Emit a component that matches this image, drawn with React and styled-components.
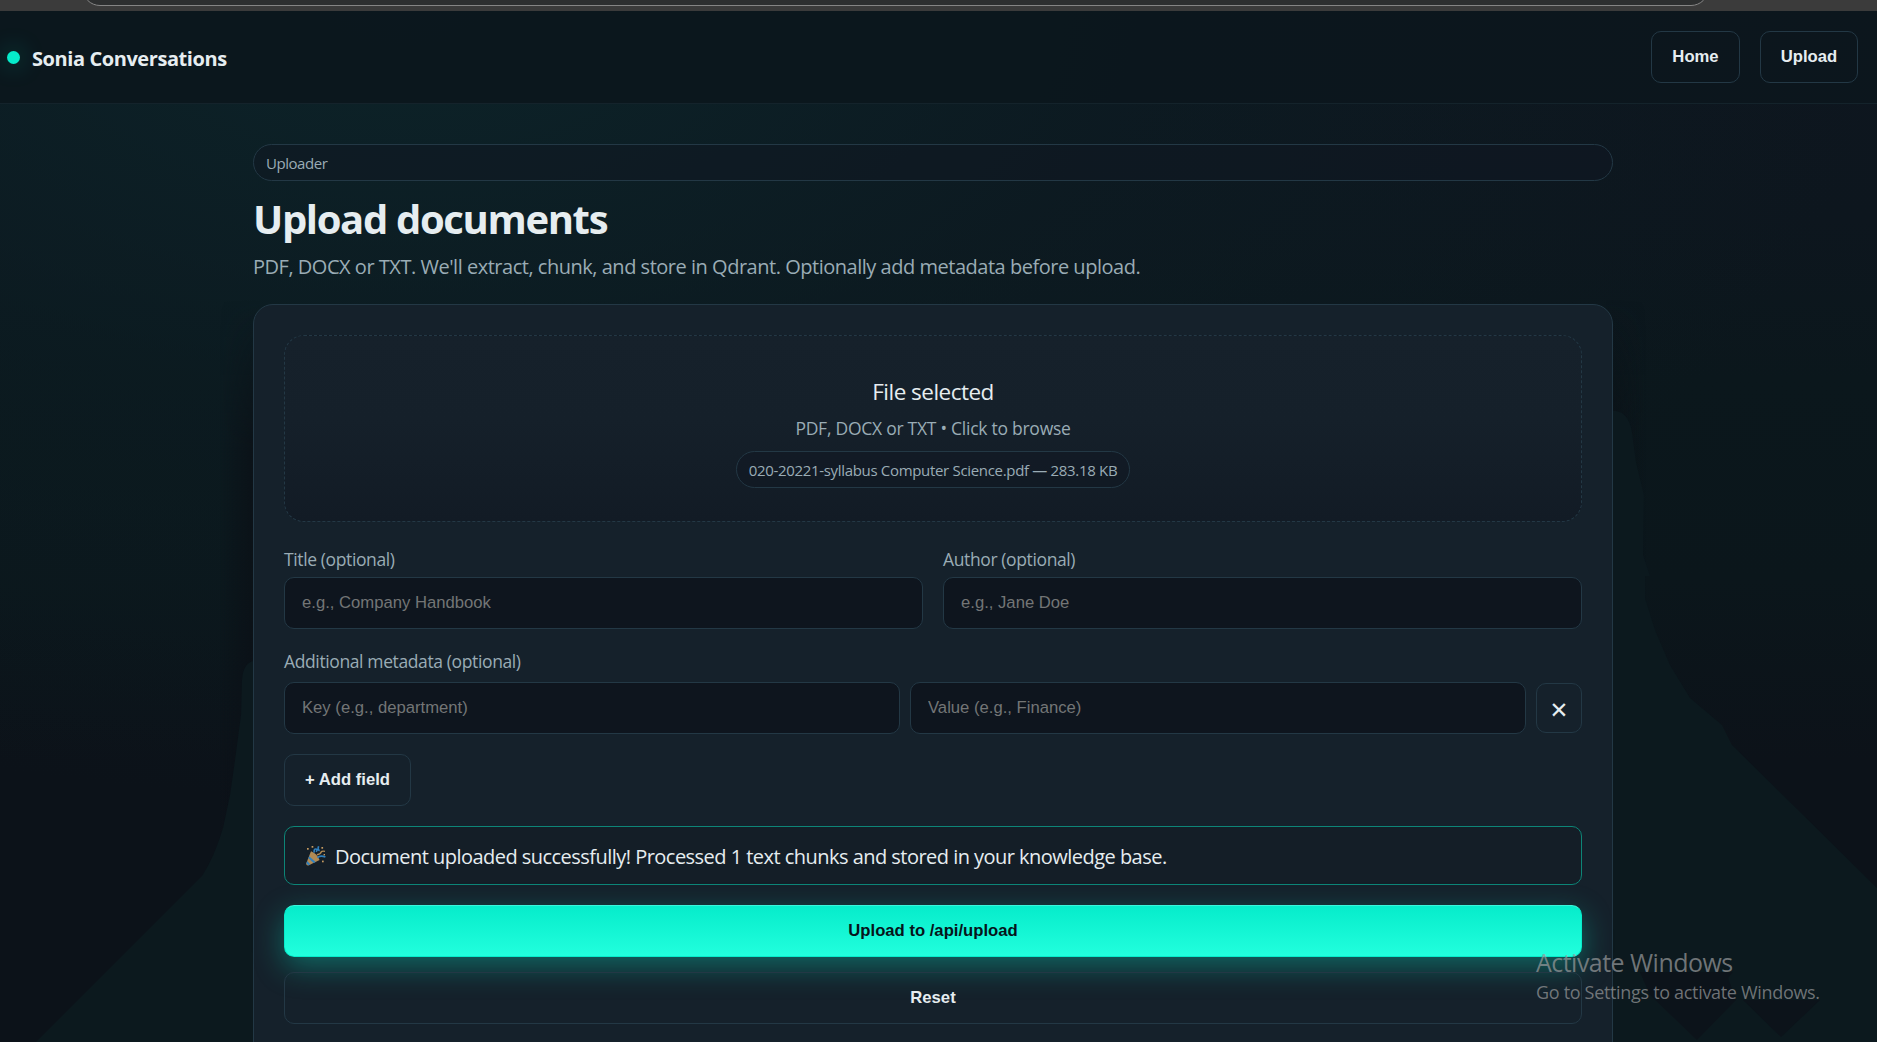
import React from 'react';
import styled, { createGlobalStyle, css } from 'styled-components';

const c = {
  text: '#e6edf0',
  muted: '#9aacb5',
  line: '#233845',
  accent: '#06eccb',
  field: '#0e151e',
};

const ui = "'Open Sans', 'Noto Sans', sans-serif";
const control = "'Liberation Sans', Arial, sans-serif";

const GlobalStyle = createGlobalStyle`
  *, *::before, *::after { box-sizing: border-box; }
  body { margin: 0; background: #0c1118; }
  h1, p { margin: 0; }
`;

const Page = styled.div`
  position: relative;
  height: 1042px;
  overflow: hidden;
  display: flex;
  flex-direction: column;
  font-family: ${ui};
  color: ${c.text};
  background:
    radial-gradient(ellipse 1480px 800px at 400px 0, rgba(12, 37, 42, 0.9), rgba(12, 30, 36, 0.5) 50%, rgba(12, 30, 36, 0) 100%),
    linear-gradient(180deg, #0e161f 0, #0d161e 220px, #0b171c 380px, #0b161b 580px, #0c1219 760px);
`;

const Backdrop = styled.svg`
  position: absolute;
  inset: 0;
  width: 1877px;
  height: 1042px;
`;

const BrowserEdge = styled.div`
  position: relative;
  flex: none;
  display: flex;
  align-items: flex-end;
  height: 11px;
  padding: 0 168px 5px 82px;
  overflow: hidden;
  background: #3b3b3b;
`;

const AddressBar = styled.div`
  flex: 1;
  height: 36px;
  border: 1px solid #858585;
  border-radius: 18px;
  background: #2d2f30;
`;

const Header = styled.header`
  position: relative;
  flex: none;
  display: flex;
  align-items: center;
  justify-content: space-between;
  height: 93px;
  padding: 0 19px 0 7px;
  border-bottom: 1px solid #14232b;
  background: rgba(12, 23, 29, 0.93);
`;

const Brand = styled.div`
  display: flex;
  align-items: center;
  gap: 12px;
  font-size: 20px;
  font-weight: 700;
  line-height: 30px;
  letter-spacing: -0.42px;

  span { padding-top: 4px; }
`;

const Dot = styled.i`
  width: 13px;
  height: 13px;
  border-radius: 50%;
  background: ${c.accent};
  box-shadow: 0 0 25px rgba(6, 236, 203, 0.4);
`;

const Nav = styled.nav`
  display: flex;
  gap: 20px;
`;

const Button = styled.button`
  display: flex;
  align-items: center;
  justify-content: center;
  height: 52px;
  padding: 0 20px 1px;
  width: ${(p) => p.$width || 'auto'};
  border: 1px solid ${c.line};
  border-radius: 10px;
  background: transparent;
  color: ${c.text};
  font: 700 16.67px ${control};
  ${(p) => p.$primary && css`
    border-color: ${c.accent};
    border-top-color: #3bf5da;
    background: linear-gradient(180deg, #06eccb, #22ffdd);
    color: #06151b;
    box-shadow: 0 10px 30px rgba(6, 236, 203, 0.35);
  `}
`;

const Main = styled.main`
  position: relative;
  display: flex;
  flex-direction: column;
  width: 1360px;
  margin-left: 253px;
  padding-top: 40px;
`;

const Pill = styled.div`
  display: flex;
  align-items: center;
  height: 37px;
  padding: 1px 12px 0;
  border: 1px solid ${c.line};
  border-radius: 19px;
  background: rgba(17, 24, 34, 0.55);
  color: ${c.muted};
  font-size: 15px;
  letter-spacing: ${(p) => p.$tracking};
`;

const Title = styled.h1`
  margin-top: 13px;
  font-size: 40px;
  font-weight: 700;
  line-height: 49px;
  letter-spacing: -1.35px;
`;

const Lead = styled.p`
  margin: 9px 0 22px;
  color: ${c.muted};
  font-size: 20px;
  line-height: 30px;
  letter-spacing: -0.48px;
`;

const Card = styled.section`
  display: flex;
  flex-direction: column;
  padding: 30px 30px 60px;
  border: 1px solid ${c.line};
  border-radius: 20px;
  background: #15212b;
`;

const DropZone = styled.div`
  display: flex;
  flex-direction: column;
  align-items: center;
  height: 187px;
  padding-top: 39px;
  border: 1px dashed ${c.line};
  border-radius: 20px;
  background: linear-gradient(180deg, #16212b, #15202a 45%, #121b25);
`;

const DropTitle = styled.p`
  font-size: 22.5px;
  line-height: 34px;
  letter-spacing: -0.52px;
`;

const DropHint = styled.p`
  margin: 6px 0 10px;
  color: ${c.muted};
  font-size: 17.5px;
  line-height: 26px;
  letter-spacing: -0.26px;
`;

const FieldGrid = styled.div`
  display: grid;
  grid-template-columns: 1fr 1fr;
  gap: 20px;
  margin: 24px 0 19px;
`;

const Field = styled.label`
  display: flex;
  flex-direction: column;
  gap: 5px;
`;

const Label = styled.span`
  color: ${c.muted};
  font-size: 17.5px;
  line-height: 26px;
  letter-spacing: -0.38px;
`;

const Input = styled.input`
  width: 100%;
  min-width: 0;
  height: 52px;
  padding: 0 17px 1px;
  border: 1px solid ${c.line};
  border-radius: 10px;
  background: ${c.field};
  color: ${c.text};
  font: 400 16.67px ${control};

  &::placeholder { color: #737576; opacity: 1; }
`;

const MetaRow = styled.div`
  display: grid;
  grid-template-columns: 1fr 1fr 46px;
  align-items: center;
  gap: 10px;
  margin: 8px 0 20px;
`;

const RemoveButton = styled.button`
  height: 50px;
  padding: 4px 0 0;
  border: 1px solid ${c.line};
  border-radius: 10px;
  background: #15212b;
  color: ${c.text};
  font: 400 22.5px/24px 'DejaVu Sans', sans-serif;
`;

const Success = styled.div`
  display: flex;
  align-items: center;
  gap: 9px;
  height: 59px;
  margin: 20px 0;
  padding: 0 20px;
  border: 1px solid #0d8577;
  border-radius: 10px;
  background: #141e27;
  font-size: 20px;
  letter-spacing: -0.53px;

  span { padding-top: 2px; }
`;

const Actions = styled.div`
  display: flex;
  flex-direction: column;
  gap: 15px;
`;

const Watermark = styled.div`
  position: absolute;
  left: 1536px;
  top: 944px;
  color: rgba(150, 152, 154, 0.72);
  font-size: 25px;
  line-height: 36px;
  letter-spacing: -0.53px;
  white-space: nowrap;

  small {
    display: block;
    font-size: 18px;
    line-height: 24px;
    letter-spacing: -0.32px;
  }
`;

function Scenery() {
  return (
    <Backdrop viewBox="0 0 1877 1042" aria-hidden="true">
      <defs>
        <linearGradient id="shadeLeft" x1="0" x2="1" y1="0" y2="0">
          <stop offset="0" stopColor="#0b1016" stopOpacity="0" />
          <stop offset="1" stopColor="#0b1016" stopOpacity="0.9" />
        </linearGradient>
        <linearGradient id="shadeRight" x1="1" x2="0" y1="0" y2="0">
          <stop offset="0" stopColor="#0b1016" stopOpacity="0" />
          <stop offset="1" stopColor="#0b1016" stopOpacity="0.9" />
        </linearGradient>
        <linearGradient id="fade" x1="0" x2="0" y1="0" y2="1">
          <stop offset="0" stopColor="#000" />
          <stop offset="0.25" stopColor="#fff" />
        </linearGradient>
        <mask id="fadeIn"><rect x="0" y="300" width="1877" height="600" fill="url(#fade)" /></mask>
      </defs>
      <g mask="url(#fadeIn)">
        <rect x="220" y="300" width="40" height="600" fill="url(#shadeLeft)" />
        <rect x="1606" y="300" width="40" height="600" fill="url(#shadeRight)" />
      </g>
      <path
        fill="#0c191e"
        d="M260 661H253Q243 664 242 680L241 715L235 760L230 795L223 828Q214 858 202 876L36 1042H260Z"
      />
      <path
        fill="#0c191e"
        d="M1606 411H1616Q1631 413 1633 440L1636 462L1644 495L1643 555L1650 576H1645V598L1655 630L1670 665L1690 698L1722 725L1732 745L1877 888V1042H1606Z"
      />
      <path fill="#0c131a" d="M1640 972H1733L1728 978L1736 1000L1697 1040L1650 995Z" />
      <path fill="#0c131a" d="M1743 1000H1820L1781 1037Z" />
    </Backdrop>
  );
}

function PartyPopper() {
  return (
    <svg width="21" height="21" viewBox="0 0 21 21" aria-hidden="true">
      <path d="M6 6.2Q12 8.5 14.6 15L3.4 20.4Q1 20.8 1.2 18.4Z" fill="#b08a54" />
      <path d="M4.2 11.2L10.6 17L8.6 18L3.4 13.3ZM2.2 16L5.4 19.2L3.6 20.2L1.4 18.6Z" fill="#2f80bf" />
      <path d="M9.2 7.6Q8.6 3.4 11.4 4.2Q13 5.4 10.8 6.6M13.6 1.2Q12.2 4.4 14.6 5.8" fill="none" stroke="#2f80bf" strokeWidth="1.6" />
      <path d="M12.4 12.6Q15.4 9.8 20.4 12" fill="none" stroke="#2f80bf" strokeWidth="1.7" />
      <path d="M12 9.8Q15.6 9.4 16.4 6.6Q17.4 5.8 20 6.4" fill="none" stroke="#b08a54" strokeWidth="1.4" />
      <g fill="#c59a60">
        <rect x="2" y="3" width="1.7" height="1.7" />
        <rect x="6.6" y="1" width="1.7" height="1.7" />
        <rect x="16.4" y="2" width="1.7" height="1.7" />
        <rect x="17" y="15.6" width="1.7" height="1.7" />
        <rect x="18.6" y="9" width="1.4" height="1.4" />
      </g>
    </svg>
  );
}

export default function App() {
  return (
    <Page>
      <GlobalStyle />
      <Scenery />
      <BrowserEdge><AddressBar /></BrowserEdge>
      <Header>
        <Brand><Dot /><span>Sonia Conversations</span></Brand>
        <Nav>
          <Button $width="89px">Home</Button>
          <Button $width="98px">Upload</Button>
        </Nav>
      </Header>
      <Main>
        <Pill $tracking="-0.45px">Uploader</Pill>
        <Title>Upload documents</Title>
        <Lead>PDF, DOCX or TXT. We'll extract, chunk, and store in Qdrant. Optionally add metadata before upload.</Lead>
        <Card>
          <DropZone>
            <DropTitle>File selected</DropTitle>
            <DropHint>PDF, DOCX or TXT • Click to browse</DropHint>
            <Pill $tracking="-0.32px">020-20221-syllabus Computer Science.pdf — 283.18 KB</Pill>
          </DropZone>
          <FieldGrid>
            <Field>
              <Label>Title (optional)</Label>
              <Input placeholder="e.g., Company Handbook" />
            </Field>
            <Field>
              <Label>Author (optional)</Label>
              <Input placeholder="e.g., Jane Doe" />
            </Field>
          </FieldGrid>
          <Label>Additional metadata (optional)</Label>
          <MetaRow>
            <Input placeholder="Key (e.g., department)" />
            <Input placeholder="Value (e.g., Finance)" />
            <RemoveButton aria-label="Remove field">✕</RemoveButton>
          </MetaRow>
          <Button $width="127px">+ Add field</Button>
          <Success>
            <PartyPopper />
            <span>Document uploaded successfully! Processed 1 text chunks and stored in your knowledge base.</span>
          </Success>
          <Actions>
            <Button $primary>Upload to /api/upload</Button>
            <Button>Reset</Button>
          </Actions>
        </Card>
      </Main>
      <Watermark>
        Activate Windows
        <small>Go to Settings to activate Windows.</small>
      </Watermark>
    </Page>
  );
}
